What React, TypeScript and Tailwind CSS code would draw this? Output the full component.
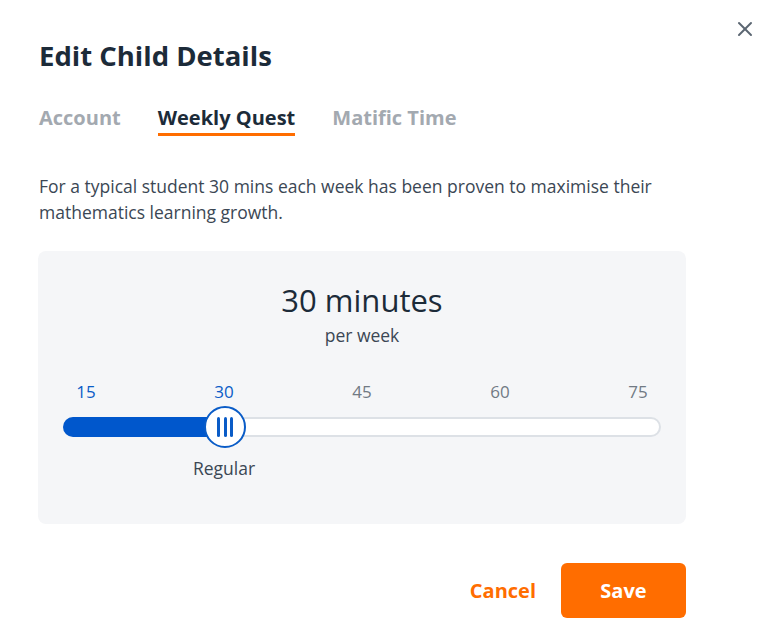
import { X } from 'lucide-react';

const ticks = [15, 30, 45, 60, 75];

export default function App() {
  const value = 30;

  return (
    <div className="relative w-[774px] h-[637px] bg-white font-['Open_Sans',sans-serif] text-[#1c2b39]">
      {/* Close */}
      <button className="absolute right-[17px] top-[17px] text-[#5b6672]">
        <X size={24} strokeWidth={2} />
      </button>

      <div className="pl-[39px] pr-[88px] pt-[38px]">
        {/* Header */}
        <h1 className="text-[27.5px] leading-[36px] font-bold">Edit Child Details</h1>

        {/* Tabs */}
        <div className="flex gap-[37px] mt-[31px] text-[20px] font-bold leading-[26px]">
          <span className="text-[#a3a9b0]">Account</span>
          <span className="pb-[2px] border-b-[3px] border-[#ff6d00]">Weekly Quest</span>
          <span className="text-[#a3a9b0]">Matific Time</span>
        </div>

        {/* Description */}
        <p className="mt-[37px] text-[17.5px] leading-[26px] text-[#3b4754]">
          For a typical student 30 mins each week has been proven to maximise their mathematics learning growth.
        </p>

        {/* Slider panel */}
        <div className="-ml-px mt-[26px] w-[648px] h-[273px] rounded-lg bg-[#f5f6f8] pl-[25px] pr-[25px] pt-[29px] flex flex-col items-center">
          <div className="text-[31px] leading-[40px] text-[#1c2b39]">{value} minutes</div>
          <div className="text-[17.5px] leading-[22px] text-[#3b4754] mt-[4px]">per week</div>

          <div className="w-full mt-[35px]">
            <div className="flex justify-between px-[11px] text-[17px] leading-[22px]">
              {ticks.map(t => (
                <span
                  key={t}
                  className={`w-[24px] text-center ${t <= value ? 'text-[#0a5cc7]' : 'text-[#717a84]'}`}
                >
                  {t}
                </span>
              ))}
            </div>

            <div className="relative mt-[14px] h-[20px] rounded-full bg-white border-2 border-[#dde1e6]">
              <div className="absolute -left-[2px] -top-[2px] h-[20px] w-[160px] rounded-full bg-[#0057cc]" />
              <div className="absolute left-[139px] top-1/2 -translate-y-1/2 w-[42px] h-[42px] rounded-full bg-white border-2 border-[#0a5cc7] flex items-center justify-center gap-[3.5px]">
                <span className="w-[3px] h-[20px] bg-[#0a5cc7] rounded-sm" />
                <span className="w-[3px] h-[20px] bg-[#0a5cc7] rounded-sm" />
                <span className="w-[3px] h-[20px] bg-[#0a5cc7] rounded-sm" />
              </div>
            </div>

            <div className="ml-[161px] -translate-x-1/2 w-fit mt-[20px] text-[17.5px] leading-[22px] text-[#3b4754]">
              Regular
            </div>
          </div>
        </div>

        {/* Actions */}
        <div className="w-[647px] flex justify-end items-center gap-[25px] mt-[39px]">
          <button className="text-[20px] font-bold text-[#ff6d00]">Cancel</button>
          <button className="w-[125px] h-[55px] rounded-md bg-[#ff6d00] text-white text-[20px] font-bold">
            Save
          </button>
        </div>
      </div>
    </div>
  );
}
